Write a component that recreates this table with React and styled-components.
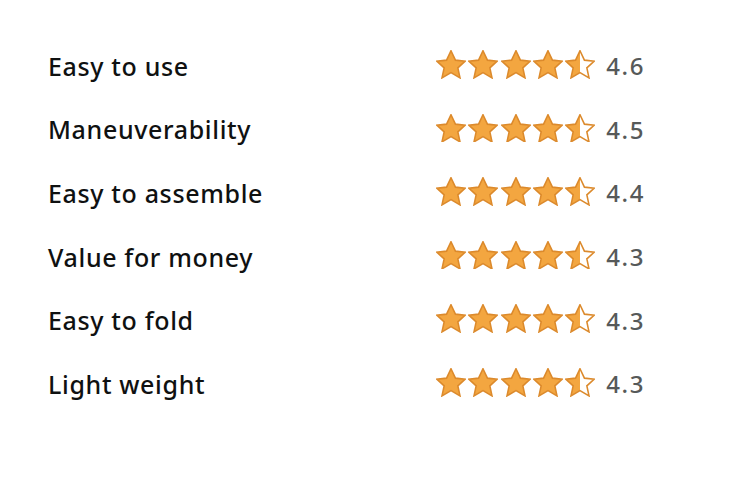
import React from "react";
import styled, { createGlobalStyle } from "styled-components";

const Global = createGlobalStyle`
  html, body { margin: 0; padding: 0; background: #fff; }
  body { font-family: "Noto Sans", "Open Sans", Arial, sans-serif; }
`;

const List = styled.div`
  padding: 34px 0 0 48px;
  display: flex;
  flex-direction: column;
`;

const Row = styled.div`
  display: grid;
  grid-template-columns: 388px max-content max-content;
  justify-content: start;
  align-items: center;
  height: 63.6px;
`;

const Label = styled.span`
  font-size: 25px;
  font-weight: 500;
  color: #0f1111;
  letter-spacing: 0.65px;
`;

const Stars = styled.div`
  display: flex;
  gap: 2.3px;
  align-items: center;
  margin-top: -3px;
`;

const Score = styled.span`
  margin-left: 11px;
  font-size: 24px;
  font-weight: 500;
  letter-spacing: 1.6px;
  color: #565959;
`;

const STAR = "12,2 15.1,8.6 22,9.3 16.8,14 18.3,21 12,17.3 5.7,21 7.2,14 2,9.3 8.9,8.6";

function Star({ fill, id }) {
  return (
    <svg width="30" height="28.6" viewBox="1.5 1.5 21 20">
      <defs>
        <linearGradient id={id} x1="0" x2="1" y1="0" y2="0">
          <stop offset={fill} stopColor="#f3a640" />
          <stop offset={fill} stopColor="#ffffff" />
        </linearGradient>
      </defs>
      <polygon points={STAR} fill={`url(#${id})`} stroke="#dc8a2c" strokeWidth="1.1" strokeLinejoin="miter" />
    </svg>
  );
}

const data = [
  ["Easy to use", "4.6"],
  ["Maneuverability", "4.5"],
  ["Easy to assemble", "4.4"],
  ["Value for money", "4.3"],
  ["Easy to fold", "4.3"],
  ["Light weight", "4.3"],
];

export default function App() {
  return (
    <>
      <Global />
      <List>
        {data.map(([label, score], r) => (
          <Row key={label}>
            <Label>{label}</Label>
            <Stars>
              {[0, 1, 2, 3, 4].map((i) => (
                <Star key={i} id={`g${r}-${i}`} fill={i < 4 ? 1 : 0.5} />
              ))}
            </Stars>
            <Score>{score}</Score>
          </Row>
        ))}
      </List>
    </>
  );
}
